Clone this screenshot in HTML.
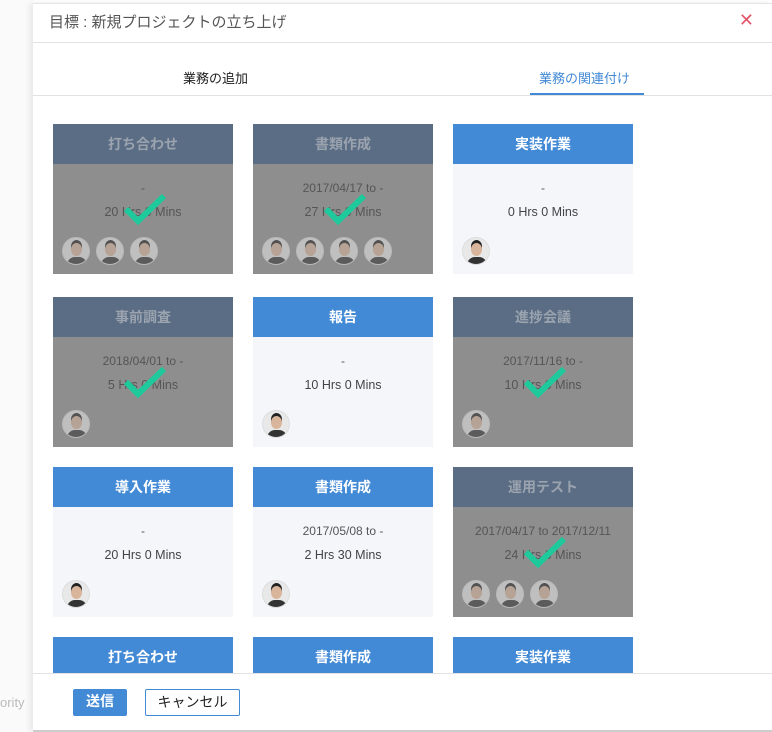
<!DOCTYPE html>
<html><head><meta charset="utf-8"><style>
*{margin:0;padding:0;box-sizing:border-box}
body{width:772px;height:732px;overflow:hidden;background:#fff;font-family:"Liberation Sans","Noto Sans CJK JP",sans-serif;position:relative}
.bg{position:absolute;left:0;top:0;width:33px;height:732px;background:#fafafa}
.modal{position:absolute;left:33px;top:3px;width:739px;height:729px;background:#fff;box-shadow:-3px 0 6px rgba(0,0,0,.08);border-top:1px solid #e4e4e4}
.title{position:absolute;left:16px;top:7px;font-size:15px;color:#555}
.x{position:absolute;right:18px;top:6px;font-size:18px;color:#e5566a}
.hl{position:absolute;left:0;width:739px;height:1px;background:#e2e2e2}
.tab{position:absolute;top:64px;font-size:13px;color:#222}
.card{position:absolute;width:180px;height:150px;background:#f4f6fa}
.card .h{height:40px;background:#438ad6;color:#fff;font-weight:bold;font-size:14px;text-align:center;line-height:40px}
.card .d{text-align:center;font-size:12px;color:#555;margin-top:17px;height:18px}
.card .t{text-align:center;font-size:12.5px;color:#444;margin-top:6px}
.av{position:absolute;top:113px;width:28px;height:28px;border-radius:50%;background:#e8e8e8;border:1px solid #ddd;overflow:hidden}
.av:before{content:"";position:absolute;left:8px;top:5px;width:11px;height:13px;border-radius:50%;background:#d9b59b;box-shadow:0 -3px 0 #222}
.av:after{content:"";position:absolute;left:4px;top:19px;width:20px;height:12px;border-radius:8px 8px 0 0;background:#333}
.sel .h{background:#5b6d85;color:#9aa3ae}
.sel{background:#8e8e8e}
.sel .d,.sel .t{color:#555}
.sel .av{opacity:.55}
.chk{position:absolute;left:0;top:0}
.btn{position:absolute;height:27px;font-size:14px;line-height:25px;text-align:center;border-radius:2px}
</style></head><body>
<div class="bg"></div>
<div style="position:absolute;left:0;top:695px;font-size:13px;color:#bbb">ority</div>
<div class="modal">
<div class="title">目標 : 新規プロジェクトの立ち上げ</div>
<div class="x">✕</div>
<div class="hl" style="top:38px"></div>
<div class="tab" style="left:150px">業務の追加</div>
<div class="tab" style="left:506px;color:#438ad6">業務の関連付け</div>
<div style="position:absolute;left:497px;top:89px;width:114px;height:2px;background:#438ad6"></div>
<div class="hl" style="top:91px"></div>
</div>

<div class="card sel" style="left:53px;top:124px"><div class="h">打ち合わせ</div><div class="d">-</div><div class="t">20 Hrs 0 Mins</div><div class="av" style="left:9px"></div><div class="av" style="left:43px"></div><div class="av" style="left:77px"></div><svg class="chk" width="180" height="150"><polyline points="73,85 85,97 111,72" fill="none" stroke="#1ec99b" stroke-width="6"/></svg></div>
<div class="card sel" style="left:253px;top:124px"><div class="h">書類作成</div><div class="d">2017/04/17 to -</div><div class="t">27 Hrs 0 Mins</div><div class="av" style="left:9px"></div><div class="av" style="left:43px"></div><div class="av" style="left:77px"></div><div class="av" style="left:111px"></div><svg class="chk" width="180" height="150"><polyline points="73,85 85,97 111,72" fill="none" stroke="#1ec99b" stroke-width="6"/></svg></div>
<div class="card" style="left:453px;top:124px"><div class="h">実装作業</div><div class="d">-</div><div class="t">0 Hrs 0 Mins</div><div class="av" style="left:9px"></div></div>

<div class="card sel" style="left:53px;top:297px"><div class="h">事前調査</div><div class="d">2018/04/01 to -</div><div class="t">5 Hrs 0 Mins</div><div class="av" style="left:9px"></div><svg class="chk" width="180" height="150"><polyline points="73,85 85,97 111,72" fill="none" stroke="#1ec99b" stroke-width="6"/></svg></div>
<div class="card" style="left:253px;top:297px"><div class="h">報告</div><div class="d">-</div><div class="t">10 Hrs 0 Mins</div><div class="av" style="left:9px"></div></div>
<div class="card sel" style="left:453px;top:297px"><div class="h">進捗会議</div><div class="d">2017/11/16 to -</div><div class="t">10 Hrs 0 Mins</div><div class="av" style="left:9px"></div><svg class="chk" width="180" height="150"><polyline points="73,85 85,97 111,72" fill="none" stroke="#1ec99b" stroke-width="6"/></svg></div>

<div class="card" style="left:53px;top:467px"><div class="h">導入作業</div><div class="d">-</div><div class="t">20 Hrs 0 Mins</div><div class="av" style="left:9px"></div></div>
<div class="card" style="left:253px;top:467px"><div class="h">書類作成</div><div class="d">2017/05/08 to -</div><div class="t">2 Hrs 30 Mins</div><div class="av" style="left:9px"></div></div>
<div class="card sel" style="left:453px;top:467px"><div class="h">運用テスト</div><div class="d">2017/04/17 to 2017/12/11</div><div class="t">24 Hrs 0 Mins</div><div class="av" style="left:9px"></div><div class="av" style="left:43px"></div><div class="av" style="left:77px"></div><svg class="chk" width="180" height="150"><polyline points="73,85 85,97 111,72" fill="none" stroke="#1ec99b" stroke-width="6"/></svg></div>

<div class="card" style="left:53px;top:637px;height:36px"><div class="h">打ち合わせ</div></div>
<div class="card" style="left:253px;top:637px;height:36px"><div class="h">書類作成</div></div>
<div class="card" style="left:453px;top:637px;height:36px"><div class="h">実装作業</div></div>

<div style="position:absolute;left:33px;top:673px;width:739px;height:59px;background:#fff;border-top:1px solid #e2e2e2"></div>
<div class="btn" style="left:73px;top:689px;width:54px;background:#438ad6;color:#fff;font-weight:bold">送信</div>
<div class="btn" style="left:145px;top:689px;width:95px;border:1px solid #438ad6;color:#222;background:#fff">キャンセル</div>
<div style="position:absolute;left:33px;top:730px;width:739px;height:2px;background:#ccc"></div>
</body></html>
